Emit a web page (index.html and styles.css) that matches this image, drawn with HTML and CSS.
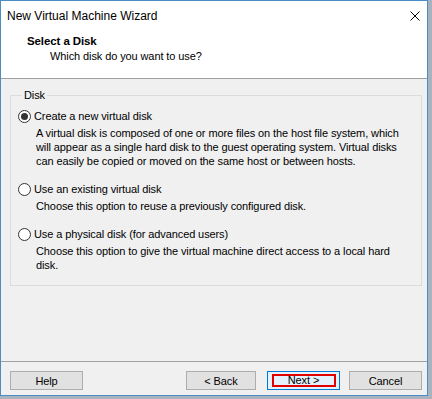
FILE: index.html
```html
<!DOCTYPE html>
<html lang="en">
<head>
  <meta charset="UTF-8" />
  <title>New Virtual Machine Wizard</title>
  <link rel="stylesheet" href="styles.css">
</head>
<body>
  <div class="window">
    <!-- barre de titre -->
    <div class="titlebar">
      <span class="title">New Virtual Machine Wizard</span>
      <svg class="close" width="10" height="10" viewBox="0 0 10 10">
        <path d="M0.5 0.5 L9.5 9.5 M9.5 0.5 L0.5 9.5" stroke="#000" stroke-width="1" fill="none" />
      </svg>
    </div>

    <!-- en-tête de l'étape -->
    <div class="header">
      <p class="step-title">Select a Disk</p>
      <p class="step-sub">Which disk do you want to use?</p>
    </div>

    <!-- contenu -->
    <div class="content">
      <fieldset class="group">
        <legend>Disk</legend>

        <div class="option">
          <div class="opt-row"><span class="radio checked"></span>Create a new virtual disk</div>
          <p class="opt-desc">A virtual disk is composed of one or more files on the host file system, which<br>will appear as a single hard disk to the guest operating system. Virtual disks<br>can easily be copied or moved on the same host or between hosts.</p>
        </div>

        <div class="option">
          <div class="opt-row"><span class="radio"></span>Use an existing virtual disk</div>
          <p class="opt-desc">Choose this option to reuse a previously configured disk.</p>
        </div>

        <div class="option">
          <div class="opt-row"><span class="radio"></span>Use a physical disk (for advanced users)</div>
          <p class="opt-desc">Choose this option to give the virtual machine direct access to a local hard<br>disk.</p>
        </div>
      </fieldset>
    </div>

    <!-- boutons -->
    <div class="footer">
      <button class="btn">Help</button>
      <div class="spacer"></div>
      <button class="btn btn-back">&lt; Back</button>
      <button class="btn btn-default"><span class="mark">Next &gt;</span></button>
      <button class="btn">Cancel</button>
    </div>
  </div>
</body>
</html>
```

FILE: styles.css
```css
* { box-sizing: border-box; margin: 0; padding: 0; }

body {
  background: #a7b3bf;
  font-family: "Liberation Sans", Arial, sans-serif;
  font-size: 11px;
  letter-spacing: -0.1px;
  color: #000;
}

.window {
  width: 428px;
  height: 396px;
  border: 1px solid #4a8cc4;
  background: #fff;
  display: flex;
  flex-direction: column;
}

.titlebar {
  height: 29px;
  display: flex;
  align-items: center;
  padding: 0 0 0 6px;
  flex-shrink: 0;
}
.title { flex: 1; font-size: 12px; letter-spacing: 0; padding-top: 1px; }
.close { margin-right: 7px; margin-top: 1px; }

.header {
  height: 49px;
  border-bottom: 1px solid #a0a0a0;
  flex-shrink: 0;
  padding-top: 4px;
}
.step-title { font-weight: bold; font-size: 11.5px; margin-left: 26px; line-height: 14px; }
.step-sub { margin-left: 49px; line-height: 14px; margin-top: 1px; }

.content {
  flex: 1;
  background: #f0f0f0;
  padding: 9px 5px 0 9px;
}

.group {
  border: 1px solid #dcdcdc;
  padding: 6px 6px 13px 7px;
}
.group legend {
  margin-left: 4px;
  padding: 0 2px;
  line-height: 14px;
}

.option { margin-bottom: 13px; }
.option:last-child { margin-bottom: 0; }

.opt-row {
  display: flex;
  align-items: center;
  height: 16px;
}
.radio {
  width: 13px; height: 13px;
  border: 1px solid #333;
  border-radius: 50%;
  background: #fff;
  margin-right: 3px;
  display: flex;
  align-items: center;
  justify-content: center;
  flex-shrink: 0;
}
.radio.checked::after {
  content: "";
  width: 7px; height: 7px;
  border-radius: 50%;
  background: #333;
}

.opt-desc {
  margin: 2px 0 0 18px;
  line-height: 14px;
  white-space: nowrap;
}

.footer {
  height: 34px;
  border-top: 1px solid #a0a0a0;
  background: #f0f0f0;
  flex-shrink: 0;
  display: flex;
  align-items: flex-start;
  padding: 9px 5px 0 9px;
}
.spacer { flex: 1; }

.btn {
  width: 73px;
  height: 19px;
  background: #e1e1e1;
  border: 1px solid #adadad;
  font: inherit;
  letter-spacing: inherit;
  color: #000;
  margin-left: 9px;
}
.btn:first-child { margin-left: 0; }
.btn-back { width: 70px; }
.btn-default {
  margin-left: 11px;
  border-color: #0078d7;
  background: #e5f1fb;
  display: flex;
  align-items: center;
  justify-content: center;
}
.mark {
  width: 64px;
  height: 13px;
  border: 2px solid #e00000;
  display: flex;
  align-items: center;
  justify-content: center;
  line-height: 9px;
}
```
